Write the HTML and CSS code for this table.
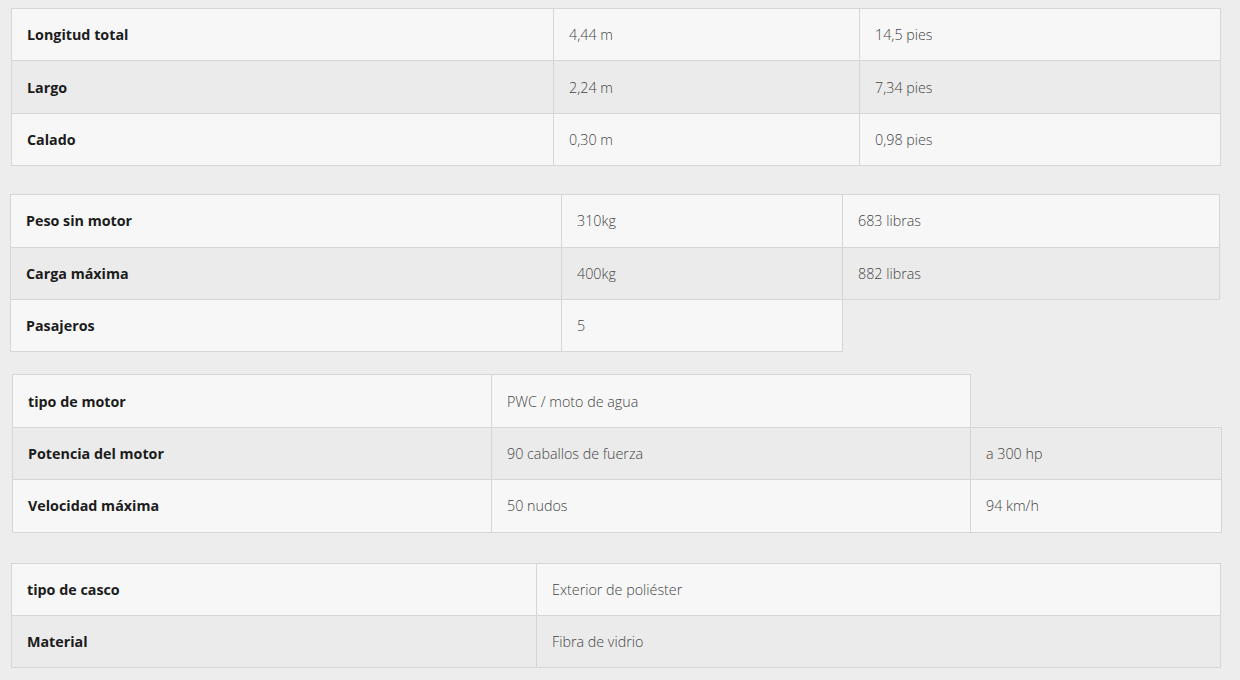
FILE: index.html
```html
<!DOCTYPE html>
<html lang="es">
<head>
<meta charset="utf-8">
<title>Especificaciones</title>
<link rel="stylesheet" href="styles.css">
</head>
<body>
<main class="page">
  <table class="spec spec-1">
    <colgroup><col class="c1"><col class="c2"><col class="c3"></colgroup>
    <tr><th>Longitud total</th><td>4,44 m</td><td>14,5 pies</td></tr>
    <tr class="alt"><th>Largo</th><td>2,24 m</td><td>7,34 pies</td></tr>
    <tr><th>Calado</th><td>0,30 m</td><td>0,98 pies</td></tr>
  </table>

  <table class="spec spec-2">
    <colgroup><col class="c1"><col class="c2"><col class="c3"></colgroup>
    <tr><th>Peso sin motor</th><td>310kg</td><td>683 libras</td></tr>
    <tr class="alt"><th>Carga máxima</th><td>400kg</td><td>882 libras</td></tr>
    <tr><th>Pasajeros</th><td>5</td></tr>
  </table>

  <table class="spec spec-3">
    <colgroup><col class="c1"><col class="c2"><col class="c3"></colgroup>
    <tr><th>tipo de motor</th><td>PWC / moto de agua</td></tr>
    <tr class="alt"><th>Potencia del motor</th><td>90 caballos de fuerza</td><td>a 300 hp</td></tr>
    <tr><th>Velocidad máxima</th><td>50 nudos</td><td>94 km/h</td></tr>
  </table>

  <table class="spec spec-4">
    <colgroup><col class="c1"><col class="c2"></colgroup>
    <tr><th>tipo de casco</th><td>Exterior de poliéster</td></tr>
    <tr class="alt"><th>Material</th><td>Fibra de vidrio</td></tr>
  </table>
</main>
</body>
</html>
```

FILE: styles.css
```css
html, body {
  margin: 0;
  padding: 0;
  background: #ededed;
}

body {
  font-family: "Open Sans", "Liberation Sans", sans-serif;
  font-size: 14.3px;
  color: #444;
}

.page {
  display: flex;
  flex-direction: column;
  align-items: flex-start;
  padding-top: 8px;
}

.spec {
  border-collapse: collapse;
  table-layout: fixed;
  width: 1209px;
}

.spec th,
.spec td {
  height: 51.4px;
  padding: 0 15px;
  border: 1px solid #d6d6d6;
  background: #f7f7f7;
  text-align: left;
  vertical-align: middle;
  white-space: nowrap;
}

.spec th {
  font-weight: 700;
  color: #1c1c1c;
}

.spec td {
  font-weight: 300;
  color: #444;
}

.spec tr.alt th,
.spec tr.alt td {
  background: #ebebeb;
}

.spec-1 { margin-left: 11px; }
.spec-1 .c1 { width: 542px; }
.spec-1 .c2 { width: 306px; }
.spec-1 .c3 { width: 361px; }

.spec-2 { margin-left: 10px; margin-top: 28px; }
.spec-2 .c1 { width: 551px; }
.spec-2 .c2 { width: 281px; }
.spec-2 .c3 { width: 377px; }

.spec-3 { margin-left: 12px; margin-top: 22px; }
.spec-3 .c1 { width: 479px; }
.spec-3 .c2 { width: 479px; }
.spec-3 .c3 { width: 251px; }

.spec-4 { margin-left: 11px; margin-top: 30px; }
.spec-4 .c1 { width: 525px; }
.spec-4 .c2 { width: 684px; }
```
